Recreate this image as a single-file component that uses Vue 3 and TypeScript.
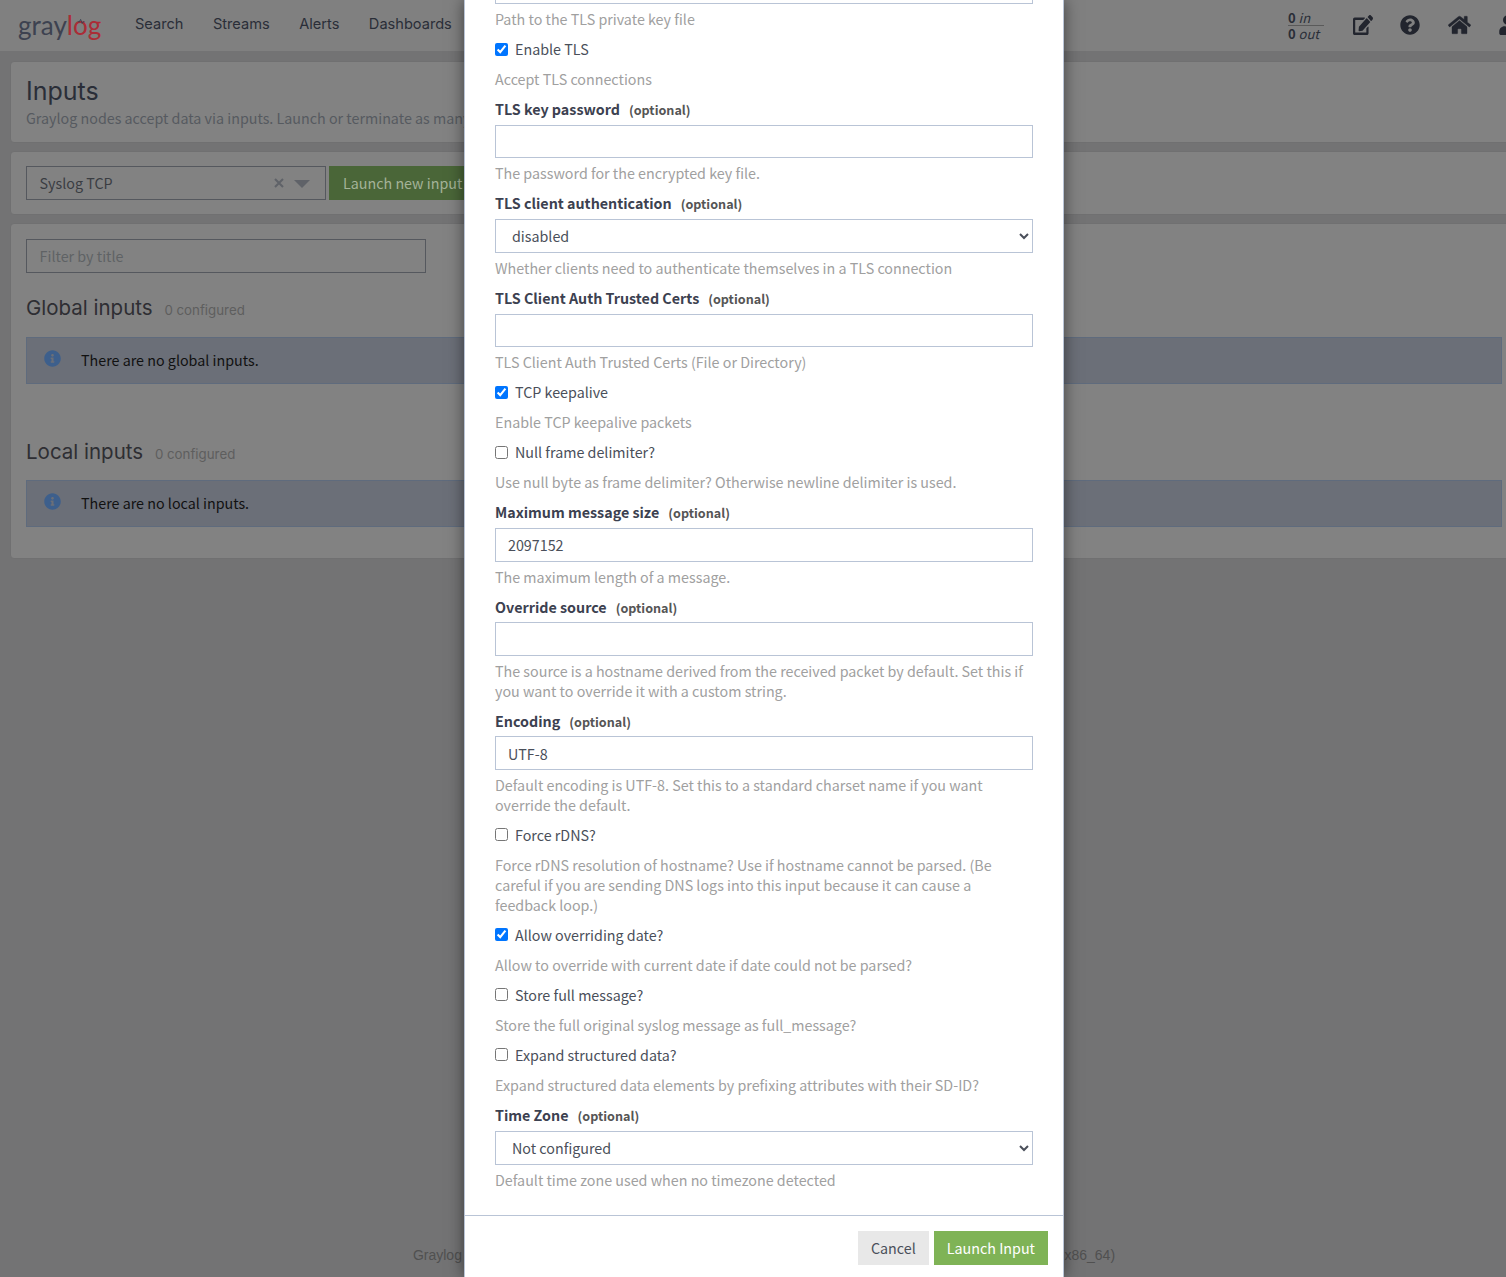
<template>
  <div class="page">
    <nav class="navbar">
      <div class="logo">
        <span class="logo-gray">gray</span><span class="logo-red">l<span class="logo-o">o<svg class="logo-wave" viewBox="0 0 10 10"><path d="M1 6h2l1.500-3 2 5 1-2h2" /></svg></span>g</span>
      </div>
      <ul class="nav-links">
        <li v-for="link in navLinks" :key="link">{{ link }}</li>
      </ul>
      <div class="nav-right">
        <div class="throughput">
          <div class="tp-in"><b>0</b> <i>in</i></div>
          <div><b>0</b> <i>out</i></div>
        </div>
        <svg class="nav-icon edit" viewBox="0 0 576 512" preserveAspectRatio="none"><path :d="icons.edit" /></svg>
        <svg class="nav-icon help" viewBox="0 0 512 512"><path :d="icons.help" /></svg>
        <svg class="nav-icon home" viewBox="0 0 576 512"><path :d="icons.home" /></svg>
        <svg class="nav-icon user" viewBox="0 0 448 512"><path :d="icons.user" /></svg>
      </div>
    </nav>

    <main class="content">
      <section class="card head-card">
        <h1>Inputs</h1>
        <p>Graylog nodes accept data via inputs. Launch or terminate as many inputs as you want here.</p>
      </section>

      <section class="card launch-card">
        <div class="type-select">
          <span>Syslog TCP</span>
          <svg class="select-clear" viewBox="0 0 10 10"><path d="M1 1l8 8M9 1l-8 8" /></svg>
          <span class="select-caret"></span>
        </div>
        <button class="launch-new">Launch new input</button>
      </section>

      <section class="card list-card">
        <input class="filter" placeholder="Filter by title" />
        <div v-for="group in groups" :key="group.title" class="group">
          <h2>{{ group.title }} <small>0 configured</small></h2>
          <div class="alert">
            <svg class="alert-icon" viewBox="0 0 512 512"><path :d="icons.info" /></svg>
            <span>{{ group.empty }}</span>
          </div>
        </div>
      </section>
    </main>

    <footer class="page-footer">Graylog 4.0.6+3a5ec25 on graylog-server1 (Oracle Corporation 1.8.0_282 on Linux 3.10.0-1160.25.1.el7.x86_64)</footer>

    <div class="modal">
      <div class="modal-body">
        <div class="clipped-input"></div>
        <template v-for="(field, i) in fields" :key="i">
          <label v-if="field.kind === 'check'" class="check-row">
            <input type="checkbox" :checked="field.checked" />
            <span>{{ field.label }}</span>
          </label>
          <template v-else-if="field.kind !== 'help'">
            <div class="field-label"><b>{{ field.label }}</b><span class="optional">(optional)</span></div>
            <select v-if="field.kind === 'select'" class="control select">
              <option>{{ field.value }}</option>
            </select>
            <input v-else class="control" :value="field.value" />
          </template>
          <p class="help-text" :class="{ 'after-control': field.kind === 'input' || field.kind === 'select' }">{{ field.help }}</p>
        </template>
      </div>
      <div class="modal-footer">
        <button class="btn-cancel">Cancel</button>
        <button class="btn-launch">Launch Input</button>
      </div>
    </div>
  </div>
</template>

<script setup lang="ts">
interface Field {
  kind: 'help' | 'check' | 'input' | 'select'
  label?: string
  value?: string
  checked?: boolean
  help: string
}

const navLinks = ['Search', 'Streams', 'Alerts', 'Dashboards']

const groups = [
  { title: 'Global inputs', empty: 'There are no global inputs.' },
  { title: 'Local inputs', empty: 'There are no local inputs.' }
]

const fields: Field[] = [
  { kind: 'help', help: 'Path to the TLS private key file' },
  { kind: 'check', label: 'Enable TLS', checked: true, help: 'Accept TLS connections' },
  { kind: 'input', label: 'TLS key password', help: 'The password for the encrypted key file.' },
  { kind: 'select', label: 'TLS client authentication', value: 'disabled', help: 'Whether clients need to authenticate themselves in a TLS connection' },
  { kind: 'input', label: 'TLS Client Auth Trusted Certs', help: 'TLS Client Auth Trusted Certs (File or Directory)' },
  { kind: 'check', label: 'TCP keepalive', checked: true, help: 'Enable TCP keepalive packets' },
  { kind: 'check', label: 'Null frame delimiter?', help: 'Use null byte as frame delimiter? Otherwise newline delimiter is used.' },
  { kind: 'input', label: 'Maximum message size', value: '2097152', help: 'The maximum length of a message.' },
  { kind: 'input', label: 'Override source', help: 'The source is a hostname derived from the received packet by default. Set this if you want to override it with a custom string.' },
  { kind: 'input', label: 'Encoding', value: 'UTF-8', help: 'Default encoding is UTF-8. Set this to a standard charset name if you want override the default.' },
  { kind: 'check', label: 'Force rDNS?', help: 'Force rDNS resolution of hostname? Use if hostname cannot be parsed. (Be careful if you are sending DNS logs into this input because it can cause a feedback loop.)' },
  { kind: 'check', label: 'Allow overriding date?', checked: true, help: 'Allow to override with current date if date could not be parsed?' },
  { kind: 'check', label: 'Store full message?', help: 'Store the full original syslog message as full_message?' },
  { kind: 'check', label: 'Expand structured data?', help: 'Expand structured data elements by prefixing attributes with their SD-ID?' },
  { kind: 'select', label: 'Time Zone', value: 'Not configured', help: 'Default time zone used when no timezone detected' }
]

const icons = {
  edit: 'M402.6 83.2l90.2 90.2c3.8 3.8 3.8 10 0 13.8L274.4 405.6l-92.8 10.3c-12.4 1.4-22.9-9.1-21.5-21.5l10.3-92.8L388.8 83.2c3.8-3.8 10-3.8 13.8 0zm162-22.9l-48.8-48.8c-15.2-15.2-39.9-15.2-55.2 0l-35.4 35.4c-3.8 3.8-3.8 10 0 13.8l90.2 90.2c3.8 3.8 10 3.8 13.8 0l35.4-35.4c15.2-15.3 15.2-40 0-55.2zM384 346.2V448H64V128h229.8c3.2 0 6.2-1.3 8.5-3.5l40-40c7.6-7.6 2.2-20.5-8.5-20.5H48C21.5 64 0 85.5 0 112v352c0 26.5 21.5 48 48 48h352c26.5 0 48-21.5 48-48V306.2c0-10.7-12.9-16-20.5-8.5l-40 40c-2.2 2.3-3.5 5.3-3.5 8.5z',
  help: 'M504 256c0 136.997-111.043 248-248 248S8 392.997 8 256C8 119.083 119.043 8 256 8s248 111.083 248 248zM262.655 90c-54.497 0-89.255 22.957-116.549 63.758-3.536 5.286-2.353 12.415 2.715 16.258l34.699 26.31c5.205 3.947 12.621 3.008 16.665-2.122 17.864-22.658 30.113-35.797 57.303-35.797 20.429 0 45.698 13.148 45.698 32.958 0 14.976-12.363 22.667-32.534 33.976C247.128 238.528 216 254.941 216 296v4c0 6.627 5.373 12 12 12h56c6.627 0 12-5.373 12-12v-1.333c0-28.462 83.186-29.647 83.186-106.667 0-58.002-60.165-102-116.531-102zM256 338c-25.365 0-46 20.635-46 46 0 25.364 20.635 46 46 46s46-20.636 46-46c0-25.365-20.635-46-46-46z',
  home: 'M280.37 148.26L96 300.11V464a16 16 0 0 0 16 16l112.06-.29a16 16 0 0 0 15.92-16V368a16 16 0 0 1 16-16h64a16 16 0 0 1 16 16v95.64a16 16 0 0 0 16 16.05L464 480a16 16 0 0 0 16-16V300L295.67 148.26a12.19 12.19 0 0 0-15.3 0zM571.6 251.47L488 182.56V44.05a12 12 0 0 0-12-12h-56a12 12 0 0 0-12 12v72.61L318.47 43a48 48 0 0 0-61 0L4.34 251.47a12 12 0 0 0-1.6 16.9l25.5 31A12 12 0 0 0 45.15 301l235.22-193.74a12.19 12.19 0 0 1 15.3 0L530.9 301a12 12 0 0 0 16.9-1.6l25.5-31a12 12 0 0 0-1.7-16.93z',
  user: 'M224 256c70.7 0 128-57.3 128-128S294.7 0 224 0 96 57.3 96 128s57.3 128 128 128zm89.6 32h-16.7c-22.2 10.2-46.9 16-72.9 16s-50.6-5.8-72.9-16h-16.7C60.2 288 0 348.2 0 422.4V464c0 26.5 21.5 48 48 48h352c26.5 0 48-21.5 48-48v-41.6c0-74.2-60.2-134.4-134.4-134.4z',
  info: 'M256 8C119.043 8 8 119.083 8 256c0 136.997 111.043 248 248 248s248-111.003 248-248C504 119.083 392.957 8 256 8zm0 110c23.196 0 42 18.804 42 42s-18.804 42-42 42-42-18.804-42-42 18.804-42 42-42zm56 254c0 6.627-5.373 12-12 12h-88c-6.627 0-12-5.373-12-12v-24c0-6.627 5.373-12 12-12h12v-64h-12c-6.627 0-12-5.373-12-12v-24c0-6.627 5.373-12 12-12h64c6.627 0 12 5.373 12 12v100h12c6.627 0 12 5.373 12 12v24z'
}
</script>

<style>
html,
body {
  margin: 0;
  overflow: hidden;
  background: #737374;
}
</style>

<style scoped>
/* the page behind the modal is drawn in its dimmed colours */
.page {
  position: relative;
  width: 1528px;
  height: 1277px;
  overflow: hidden;
  background: #737374;
  color: #2a2e38;
  font-family: "Noto Sans CJK JP", "Noto Sans", sans-serif;
  font-size: 14.3px;
  line-height: 20px;
}

/* top bar */
.navbar {
  display: flex;
  align-items: center;
  height: 51px;
  padding: 0 11px 4px 18px;
  box-sizing: border-box;
  background: #808080;
}

.logo {
  width: 117px;
  font-family: "Lato", sans-serif;
  font-size: 26px;
  line-height: 30px;
  margin-top: 2px;
}

.logo-gray {
  color: #3d4250;
}

.logo-red {
  color: #ab2c36;
}

.logo-o {
  position: relative;
}

.logo-wave {
  position: absolute;
  left: 4px;
  top: 8px;
  width: 8px;
  height: 8px;
  fill: none;
  stroke: #3d4250;
  stroke-width: 1.2;
}

.nav-links {
  display: flex;
  gap: 29.5px;
  margin: 0;
  padding: 0;
  list-style: none;
  font-family: "Inter", sans-serif;
  font-size: 14.6px;
}

.nav-right {
  display: flex;
  align-items: center;
  margin-left: auto;
  padding-top: 3px;
}

.throughput {
  width: 36px;
  margin-right: 29px;
  font-size: 13px;
  line-height: 15px;
}

.tp-in {
  border-bottom: 1px solid #5a5a5a;
}

.nav-icon {
  display: block;
  height: 20px;
  fill: #22252e;
}

.edit {
  width: 20px;
  margin-right: 27px;
}

.help {
  width: 20px;
  margin-right: 28px;
}

.home {
  width: 23px;
  margin-right: 28px;
  stroke: #22252e;
  stroke-width: 10;
}

.user {
  width: 18px;
}

/* background page */
.content {
  display: flex;
  flex-direction: column;
  gap: 8px;
  padding: 10px;
}

.card {
  box-sizing: border-box;
  padding: 15px;
  background: #828282;
  border: 1px solid #707071;
  border-radius: 4px;
}

.head-card {
  height: 82px;
  padding-top: 14px;
}

h1 {
  margin: 0;
  font-family: "Inter", sans-serif;
  font-size: 25px;
  font-weight: 400;
  line-height: 30px;
}

.head-card p {
  margin: 2px 0 0;
  color: #565a60;
}

.launch-card {
  display: flex;
  gap: 3px;
  height: 64px;
  padding-top: 14px;
}

.type-select {
  position: relative;
  display: flex;
  align-items: center;
  box-sizing: border-box;
  width: 300px;
  height: 34px;
  padding-left: 12.6px;
  border: 1px solid #55585e;
  color: #3a3d42;
}

.select-clear {
  position: absolute;
  left: 247px;
  top: 11px;
  width: 10px;
  height: 10px;
  fill: none;
  stroke: #5f6268;
  stroke-width: 2;
}

.select-caret {
  position: absolute;
  right: 15px;
  top: 13px;
  border: 8px solid transparent;
  border-top-color: #5f6268;
  border-bottom: 0;
}

.launch-new {
  height: 34px;
  padding: 0 14px;
  border: 0;
  background: #4a6638;
  color: #a4b398;
  font: inherit;
}

.list-card {
  height: 336px;
}

.filter {
  display: block;
  box-sizing: border-box;
  width: 400px;
  height: 33.6px;
  padding: 0 12.6px;
  border: 1px solid #55585e;
  background: transparent;
  font: inherit;
}

.filter::placeholder {
  color: #5f6265;
  opacity: 1;
}

.group {
  margin-top: 21px;
}

.group + .group {
  margin-top: 54px;
}

.group + .group h2 {
  margin-bottom: 12px;
}

h2 {
  margin: 0 0 13px;
  font-family: "Inter", sans-serif;
  font-size: 20.5px;
  font-weight: 400;
  line-height: 27px;
  color: #2e2e33;
}

h2 small {
  margin-left: 6px;
  font-size: 13.3px;
  color: #5e5e5e;
}

.alert {
  display: flex;
  align-items: center;
  gap: 20px;
  height: 47px;
  box-sizing: border-box;
  padding: 0 17px 1px;
  background: #6b6f78;
  border: 1px solid #5f6b7d;
  color: #111;
}

.alert-icon {
  width: 17px;
  height: 17px;
  margin-top: -3px;
  fill: #3d5f8c;
}

.page-footer {
  position: absolute;
  left: 0;
  width: 1528px;
  top: 1245px;
  text-align: center;
  font-family: "Liberation Sans", sans-serif;
  font-size: 14px;
  color: #505050;
}

/* modal */
.modal {
  position: absolute;
  left: 464px;
  top: 0;
  width: 600px;
  height: 1277px;
  box-sizing: border-box;
  overflow: hidden;
  background: #fff;
  border-left: 1px solid #b9c4d6;
  border-right: 1px solid #b9c4d6;
  box-shadow: 0 0 15px rgba(0, 0, 0, 0.5);
  color: #4a4f5a;
}

.modal-body {
  height: 1216px;
  box-sizing: border-box;
  padding: 0 30px;
  border-bottom: 1px solid #b9c4d6;
}

.clipped-input {
  height: 4px;
  margin-bottom: 5px;
  border: 1px solid #b9c4d6;
  border-top: 0;
  box-sizing: border-box;
}

.help-text {
  margin: 0 0 10px;
  color: #a0a0a0;
}

.help-text.after-control {
  margin-top: 5px;
}

.check-row {
  display: flex;
  align-items: center;
  gap: 7px;
  height: 20px;
  margin-bottom: 10px;
}

.check-row input {
  width: 13px;
  height: 13px;
  margin: 0;
}

.field-label {
  height: 20.6px;
  margin-bottom: 5px;
  color: #3c4150;
}

.field-label b {
  font-weight: 700;
}

.optional {
  margin-left: 9px;
  font-size: 12.6px;
  font-weight: 700;
  color: #555;
}

.control {
  display: block;
  box-sizing: border-box;
  width: 538px;
  height: 33.6px;
  padding: 0 12px;
  border: 1px solid #b9c4d6;
  border-radius: 0;
  background: #fff;
  color: #4a4f5a;
  font: inherit;
  outline: none;
}

.select {
  height: 34.4px;
}

.modal-footer {
  display: flex;
  justify-content: flex-end;
  gap: 5px;
  padding: 15px 15px 0;
}

.modal-footer button {
  height: 34px;
  padding: 0 13px;
  border: 0;
  font: inherit;
}

.btn-cancel {
  background: #e8e8e8;
  color: #4a4f5a;
}

.btn-launch {
  background: #7fb356;
  color: #fff;
}
</style>
